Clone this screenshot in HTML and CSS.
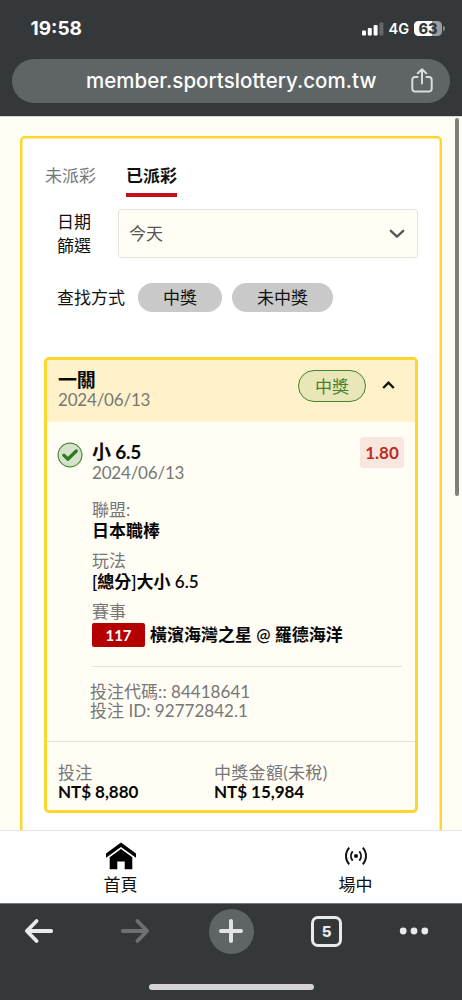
FILE: index.html
```html
<!DOCTYPE html>
<html lang="zh-Hant">
<head>
<meta charset="utf-8">
<meta name="viewport" content="width=device-width">
<title>投注紀錄</title>
<link rel="stylesheet" href="styles.css">
</head>
<body>
<div class="screen">
  <header class="browser-top">
    <div class="status">
      <span class="clock">19:58</span>
      <div class="indicators">
        <svg class="signal" width="22" height="14" viewBox="0 0 22 14"><rect x="0" y="8.5" width="4" height="5" rx="1" fill="#fff"/><rect x="5.8" y="6" width="4" height="7.5" rx="1" fill="#fff"/><rect x="11.6" y="3" width="4" height="10.5" rx="1" fill="#fff"/><rect x="17.4" y="0.5" width="4" height="13" rx="1" fill="#65696c"/></svg>
        <span class="network">4G</span>
        <div class="battery"><span class="battery-level">63</span><i class="battery-cap"></i></div>
      </div>
    </div>
    <div class="address">
      <span class="url">member.sportslottery.com.tw</span>
      <svg class="share" width="22" height="26" viewBox="0 0 22 26" fill="none" stroke="#d9dbdd" stroke-width="2" stroke-linecap="round" stroke-linejoin="round"><path d="M6.500 9H4a2.700 2.700 0 0 0-2.700 2.700v9.100A2.700 2.700 0 0 0 4 23.500h14a2.700 2.700 0 0 0 2.700-2.700v-9.100A2.700 2.700 0 0 0 18 9h-2.500M11 15.500V1.500M6.800 5.300L11 1.300l4.200 4"/></svg>
    </div>
  </header>

  <main class="page">
    <i class="scrollbar"></i>
    <section class="panel">
      <nav class="tabs"><span class="tab">未派彩</span><span class="tab tab-active">已派彩</span></nav>
      <div class="date-filter">
        <label class="date-label">日期<br>篩選</label>
        <div class="select"><span>今天</span><svg width="16" height="10" viewBox="0 0 16 10" fill="none" stroke="#555" stroke-width="2.3" stroke-linecap="round" stroke-linejoin="round"><path d="M1.8 1.8L8 7.600l6.200-5.800"/></svg></div>
      </div>
      <div class="search"><span class="search-label">查找方式</span><span class="pill pill-win">中獎</span><span class="pill pill-lose">未中獎</span></div>

      <article class="bet">
        <header class="bet-head">
          <div class="bet-title"><b>一關</b><span>2024/06/13</span></div>
          <span class="result">中獎</span>
          <svg class="collapse" width="13" height="10" viewBox="0 0 13 10" fill="none" stroke="#111" stroke-width="2.4"><path d="M1.200 8l5.300-5.300L11.800 8"/></svg>
        </header>
        <div class="pick">
          <svg class="check" width="26" height="26" viewBox="0 0 26 26"><circle cx="13" cy="13" r="11.9" fill="#d6e3cb" stroke="#4d8b3d" stroke-width="1.2"/><path d="M6.800 13.200l4 4L19.300 9" fill="none" stroke="#2f7a20" stroke-width="3.3" stroke-linecap="round" stroke-linejoin="round"/></svg>
          <div class="detail">
            <div class="selection">
              <div class="bet-title"><b>小 6.5</b><span>2024/06/13</span></div>
              <span class="odds">1.80</span>
            </div>
            <dl class="facts">
              <dt>聯盟:</dt><dd>日本職棒</dd>
              <dt>玩法</dt><dd>[總分]大小 6.5</dd>
              <dt>賽事</dt><dd class="match"><span class="match-no">117</span><span class="teams">橫濱海灣之星 @ 羅德海洋</span></dd>
            </dl>
            <div class="codes"><div>投注代碼:: 84418641</div><div>投注 ID: 92772842.1</div></div>
          </div>
        </div>
        <footer class="totals">
          <div class="total"><span>投注</span><b>NT$ 8,880</b></div>
          <div class="total"><span>中獎金額(未稅)</span><b>NT$ 15,984</b></div>
        </footer>
      </article>
    </section>
  </main>

  <nav class="site-nav">
    <a class="nav-item"><svg width="30" height="28" viewBox="0 0 30 28"><path d="M0 11.600L15 0.400l15 11.200v4.200L15 4.900 0 15.800z"/><path d="M3.700 15.200L15 6.900l11.300 8.300v12h-7.600v-7.800h-7.400v7.800H3.700z"/></svg><span>首頁</span></a>
    <a class="nav-item"><svg width="24" height="28" viewBox="0 0 24 28" fill="none" stroke="#111" stroke-width="1.9"><circle cx="12" cy="14" r="2" fill="#111" stroke="none"/><path d="M5.200 5.600a12.600 12.600 0 0 0 0 16.800M18.800 5.600a12.600 12.600 0 0 1 0 16.800M8.700 9.400a7 7 0 0 0 0 9.200M15.300 9.400a7 7 0 0 1 0 9.200"/></svg><span>場中</span></a>
  </nav>

  <footer class="browser-bottom">
    <div class="tools">
      <svg width="30" height="26" viewBox="0 0 30 26" fill="none" stroke="#e8eaed" stroke-width="3.8" stroke-linecap="round" stroke-linejoin="round"><path d="M27.200 13H3M12.600 3L2.800 13l9.800 10"/></svg>
      <svg class="forward" width="30" height="26" viewBox="0 0 30 26" fill="none" stroke="#6f7072" stroke-width="3.8" stroke-linecap="round" stroke-linejoin="round"><path d="M2.800 13H27M17.400 3l9.800 10-9.800 10"/></svg>
      <span class="new-tab"><svg width="26" height="26" viewBox="0 0 26 26" fill="none" stroke="#e1e3e6" stroke-width="4" stroke-linecap="round"><path d="M3 13h20M13 3v20"/></svg></span>
      <span class="tab-count">5</span>
      <svg width="30" height="26" viewBox="0 0 30 26" fill="#e8eaed"><circle cx="4.200" cy="13" r="3.400"/><circle cx="15" cy="13" r="3.400"/><circle cx="25.800" cy="13" r="3.400"/></svg>
    </div>
    <i class="home-bar"></i>
  </footer>
</div>
</body>
</html>
```

FILE: styles.css
```css
* { box-sizing: border-box; }
body { margin: 0; }
b { font-weight: 700; }
.screen {
  width: 462px; height: 1000px; overflow: hidden;
  display: flex; flex-direction: column;
  font: 17px/20px Lato, "Noto Sans CJK TC", sans-serif;
  color: #111; white-space: nowrap; background: #fff;
}
.browser-top { height: 116px; background: #34383b; flex: none; color: #fff; font-family: Inter, sans-serif; }
.status { height: 59px; padding: 0 20px 2px 30.5px; display: flex; align-items: center; justify-content: space-between; }
.clock { font-size: 19px; font-weight: 700; }
.indicators { display: flex; align-items: center; }
.network { font-size: 14.5px; font-weight: 600; margin: 0 5px 0 4px; }
.battery { width: 28px; height: 15px; border-radius: 4.5px; position: relative; background: linear-gradient(90deg, #fff 65%, #9a9c9d 65%); color: #34383b; text-align: center; }
.battery-level { display: block; font-size: 14.5px; line-height: 15px; font-weight: 800; }
.battery-cap { position: absolute; right: -3px; top: 5px; width: 2px; height: 5px; border-radius: 0 2px 2px 0; background: #85888a; }
.address { width: 438px; height: 44px; margin-left: 12px; border-radius: 22px; background: #5f6467; display: flex; align-items: center; justify-content: space-between; padding: 0 17px 0 74px; }
.url { font-size: 20.5px; font-weight: 500; letter-spacing: 0.04px; }

.page { flex: none; height: 714px; background: #fffdf4; padding: 19px 20px 0; overflow: hidden; position: relative; border-top: 1px solid #d6d5cf; }
.scrollbar { position: absolute; right: 3px; top: 1px; width: 4px; height: 378px; border-radius: 2px; background: #807f7b; }
.panel { height: 740px; background: #fff; border: 2px solid #ffd62e; border-radius: 5px; padding: 26px 22px; box-shadow: inset 0 0 0 0.5px #ffd62e; }
.tabs { display: flex; gap: 30px; height: 45px; padding-left: 1px; }
.tab { height: 33px; line-height: 24px; color: #777; }
.tab-active { color: #111; font-weight: 600; border-bottom: 4px solid #c20f18; }
.date-filter { display: flex; align-items: center; height: 49px; padding-left: 13px; }
.date-label { width: 61px; line-height: 24px; }
.select { width: 300px; height: 49px; border: 1px solid #e5e2da; border-radius: 4px; background: #fffdf4; display: flex; align-items: center; justify-content: space-between; padding: 0 12px 0 10px; color: #555; }
.search { margin-top: 25px; padding-left: 13px; display: flex; align-items: center; height: 29px; }
.search-label { width: 81px; }
.pill { height: 29px; line-height: 29px; border-radius: 15px; background: #c9c9c9; text-align: center; }
.pill-win { width: 84px; margin-right: 10px; }
.pill-lose { width: 101px; }

.bet { margin-top: 45px; width: 374px; height: 456px; border: 3px solid #ffd62e; border-radius: 5px; background: #fffdf4; overflow: hidden; }
.bet-head { height: 62px; background: #fff1ca; display: flex; align-items: flex-start; padding: 9px 20px 0 11px; }
.bet-title { display: flex; flex-direction: column; flex: 1; color: #777; letter-spacing: -0.2px; }
.bet-title b { font-size: 19px; line-height: 21px; color: #080808; }
.result { width: 68px; height: 32px; margin-top: 1px; border: 1px solid #438332; border-radius: 16px; background: #e9e6b8; color: #438332; text-align: center; line-height: 32px; }
.collapse { margin: 11px 0 0 16px; }
.pick { display: flex; padding: 20px 12px 0 10px; height: 319px; }
.check { margin-right: 9px; flex: none; }
.detail { flex: 1; }
.selection { display: flex; align-items: flex-start; height: 41px; margin-right: -1px; }
.selection .bet-title b { margin-top: -1px; line-height: 22px; }
.odds { width: 44px; height: 31px; margin-top: -5px; border-radius: 4px; background: #f8e6df; color: #bb2d20; font-weight: 700; font-size: 17px; line-height: 32px; text-align: center; }
.facts { margin: 16px 1px 0 0; height: 168px; border-bottom: 1px solid #e5e2da; }
.facts dt { color: #777; line-height: 21px; }
.facts dd { margin: 0 0 9px; line-height: 21px; color: #080808; font-weight: 600; }
.facts .match { display: flex; align-items: center; height: 25px; }
.match-no { width: 53px; height: 24px; border-radius: 2px; background: #b40000; color: #fff; text-align: center; font-size: 15px; font-weight: 700; line-height: 24px; margin-right: 5px; }
.codes { margin: 15px 0 0 -2px; color: #777; line-height: 19px; letter-spacing: 0.03px; }
.totals { display: flex; height: 69px; border-top: 1px solid #e5e2da; padding: 21px 0 0 11px; }
.total { width: 156px; display: flex; flex-direction: column; line-height: 19px; color: #777; letter-spacing: 0.3px; }
.total b { color: #080808; letter-spacing: -0.05px; }

.site-nav { flex: none; height: 73px; border-top: 1px solid #e4e4e4; background: #fff; display: flex; padding-left: 3px; }
.nav-item { width: 235px; display: flex; flex-direction: column; align-items: center; padding-top: 11px; gap: 4px; flex: none; }
.nav-item span { line-height: 22px; }
.browser-bottom { height: 97px; flex: none; background: #34383b; display: flex; flex-direction: column; align-items: center; border-top: 1px solid #777a7b; }
.tools { width: 462px; padding: 0 33px 0 24px; height: 54px; display: flex; align-items: center; justify-content: space-between; }
.forward { margin-left: 8px; }
.new-tab { width: 45px; height: 45px; margin: 0 -1px 0 1px; border-radius: 50%; background: #5f6467; display: grid; place-items: center; }
.tab-count { width: 31px; height: 31px; margin: 0 -1px 0 1px; border: 3px solid #e8eaed; border-radius: 7px; display: grid; place-items: center; color: #e8eaed; font: 800 15px/15px Inter, sans-serif; }
.home-bar { width: 165px; height: 6px; border-radius: 3px; background: #d5d3d4; margin-top: 26px; }
```
